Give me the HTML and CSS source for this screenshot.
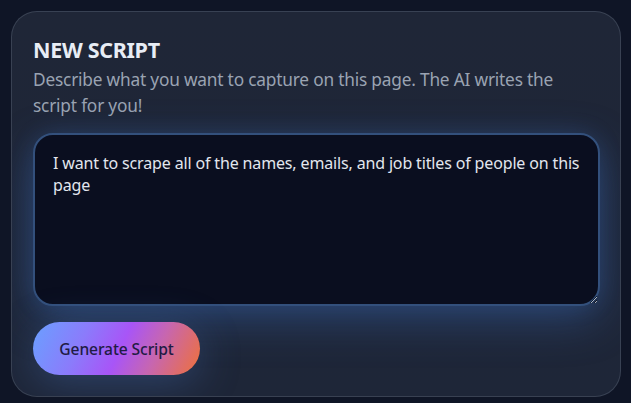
FILE: index.html
```html
<!DOCTYPE html>
<html lang="en">
<head>
<meta charset="utf-8">
<title>New Script</title>
<link rel="stylesheet" href="styles.css">
</head>
<body>
  <main class="card">
    <h1 class="title">NEW SCRIPT</h1>
    <p class="desc">Describe what you want to capture on this page. The AI writes the script for you!</p>
    <textarea class="prompt">I want to scrape all of the names, emails, and job titles of people on this page</textarea>
    <div class="actions">
      <button class="generate" type="button">Generate Script</button>
    </div>
  </main>
</body>
</html>
```

FILE: styles.css
```css
* { box-sizing: border-box; }
html, body {
  margin: 0;
  height: 100%;
}
body {
  background: #0f1526;
  font-family: "Noto Sans", "Open Sans", sans-serif;
  padding: 11px 10px 6px 11px;
}
.card {
  width: 610px;
  height: 386px;
  background: linear-gradient(180deg, #1f2637 0%, #1e2638 100%);
  border: 1px solid rgba(148, 163, 184, 0.22);
  border-radius: 26px;
  padding: 24px 21px 20px 21px;
  display: flex;
  flex-direction: column;
  position: relative;
  overflow: hidden;
}
.title {
  margin: 0;
  font-size: 21.5px;
  line-height: 28px;
  font-weight: 700;
  color: #e8edf5;
  letter-spacing: -0.3px;
}
.desc {
  margin: 3px 0 0 0;
  padding-right: 30px;
  font-size: 17.3px;
  line-height: 26px;
  color: #9aa3b2;
  letter-spacing: -0.2px;
}
.prompt {
  display: block;
  margin-top: 14px;
  width: 567px;
  height: 173px;
  background: #0a0e1f;
  border: 2px solid #33507c;
  border-radius: 20px;
  padding: 17px 10px 17px 18px;
  color: #e2e6ee;
  font-family: "Noto Sans", "Open Sans", sans-serif;
  font-size: 16px;
  line-height: 22px;
  letter-spacing: -0.15px;
  box-shadow: 0 14px 44px rgba(59, 110, 190, 0.4), 0 0 22px rgba(59, 110, 190, 0.18);
  outline: none;
  resize: both;
}
.actions {
  margin-top: 16px;
  display: flex;
}
.generate {
  width: 167px;
  height: 53px;
  border: none;
  border-radius: 27px;
  background: linear-gradient(115deg, #6aa0ff 0%, #8b7bfb 30%, #a855f7 52%, #c766b0 72%, #ef7138 100%);
  color: #1f1b44;
  font-family: "Noto Sans", "Open Sans", sans-serif;
  font-size: 15.6px;
  font-weight: 500;
  letter-spacing: -0.1px;
  box-shadow: 0 8px 40px rgba(70, 110, 180, 0.4);
  cursor: pointer;
}
```
